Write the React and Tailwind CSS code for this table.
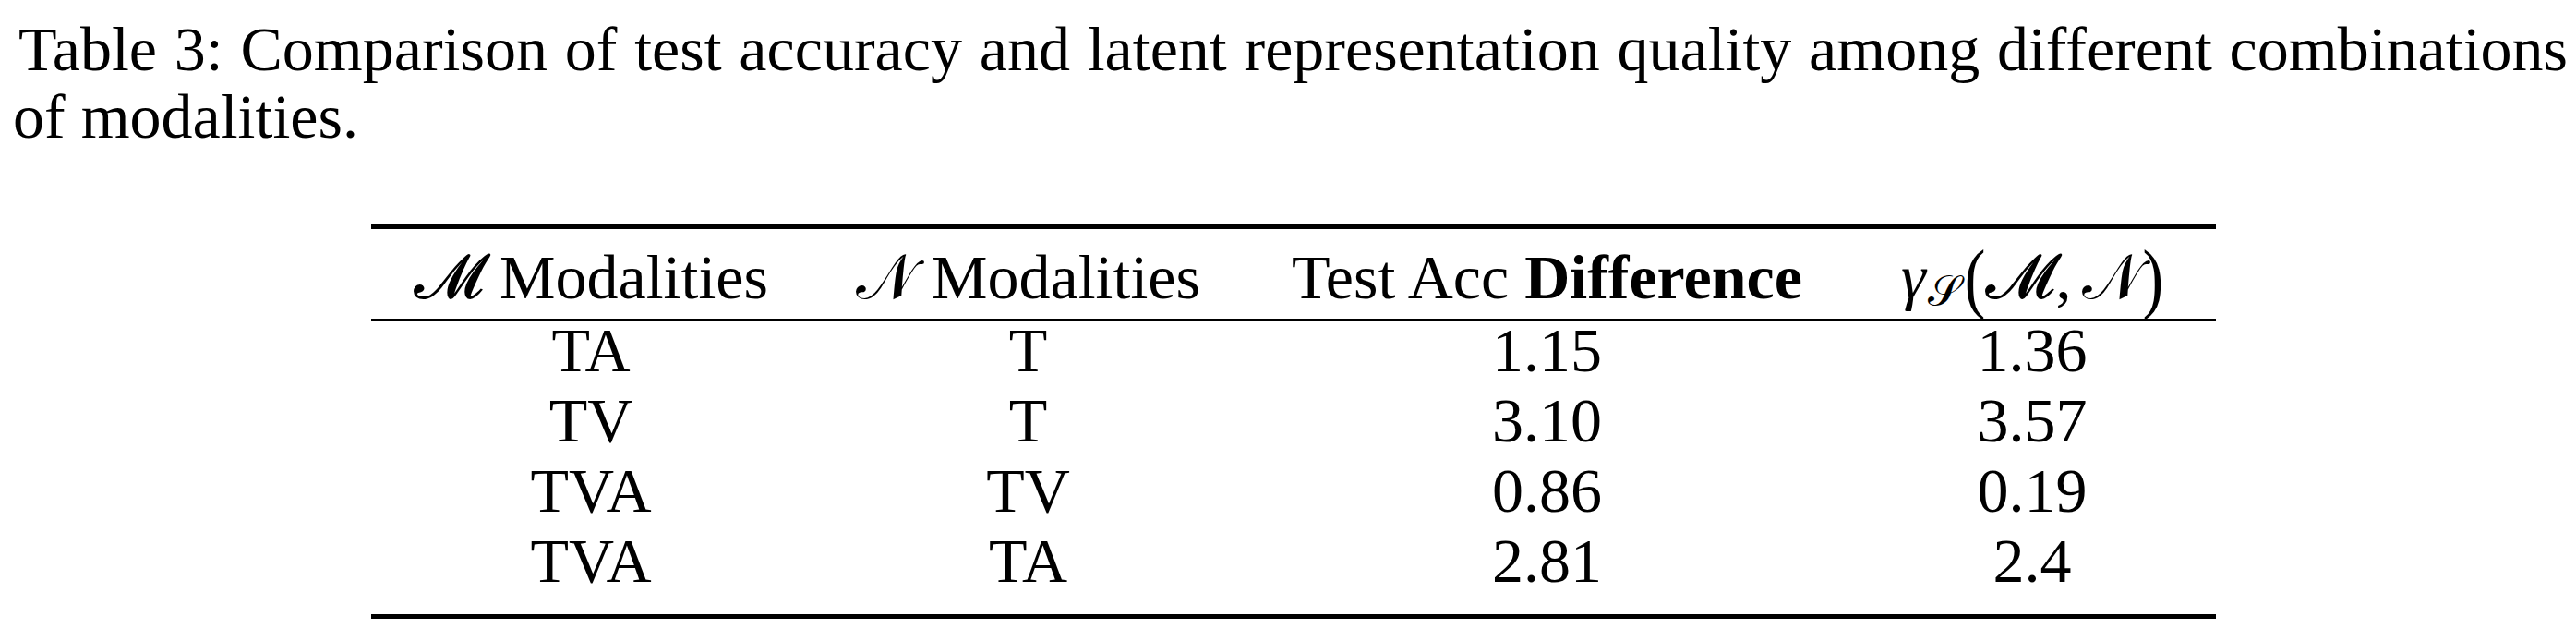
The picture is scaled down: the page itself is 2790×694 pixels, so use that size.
import React from 'react';

const rows = [
  ['TA', 'T', '1.15', '1.36'],
  ['TV', 'T', '3.10', '3.57'],
  ['TVA', 'TV', '0.86', '0.19'],
  ['TVA', 'TA', '2.81', '2.4'],
];

const cols = 'grid grid-cols-[476px_471px_653px_398px] text-center';

const Cal = ({ children, className = '' }) => (
  <span className={`font-['DejaVu_Serif','DejaVu_Sans',serif] ${className}`}>{children}</span>
);

export default function App() {
  return (
    <div className="w-[2790px] h-[694px] bg-white text-black font-['Liberation_Serif','Times_New_Roman',serif] overflow-hidden">
      {/* caption */}
      <p className="pt-[17px] pl-[14px] pr-[9px] text-[68px] leading-[73px] text-justify indent-[6px]">
        Table 3: Comparison of test accuracy and latent representation quality among different combinations of modalities.
      </p>

      {/* table */}
      <div className="mt-[80px] ml-[402px] w-[1998px] border-t-[5px] border-b-[5px] border-black text-[68px]">
        <div className={`${cols} h-[100px] pt-[14px] leading-[76px] border-b-[3px] border-black whitespace-nowrap`}>
          <div>
            <Cal>𝓜</Cal> Modalities
          </div>
          <div>
            <Cal>𝒩</Cal> Modalities
          </div>
          <div>
            Test Acc <span className="font-bold">Difference</span>
          </div>
          <div>
            <span className="italic">γ</span>
            <Cal className="text-[46px] relative top-[8px] ml-[2px] mr-[4px]">𝒮</Cal>
            <span className="inline-block scale-y-[1.25] font-light">(</span>
            <Cal>𝓜</Cal>,<Cal className="ml-[12px]">𝒩</Cal>
            <span className="inline-block scale-y-[1.25]">)</span>
          </div>
        </div>

        <div className="-mt-[7px] pb-[20px] leading-[76px]">
          {rows.map((r, i) => (
            <div key={i} className={cols}>
              {r.map((c, j) => (
                <div key={j}>{c}</div>
              ))}
            </div>
          ))}
        </div>
      </div>
    </div>
  );
}
